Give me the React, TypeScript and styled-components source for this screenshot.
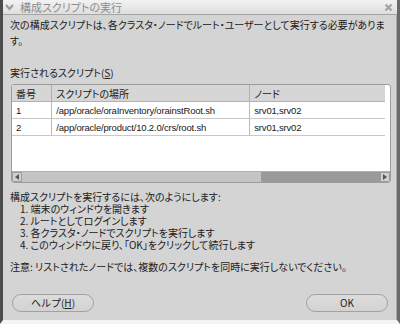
import styled, { createGlobalStyle } from "styled-components";

const GlobalStyle = createGlobalStyle`
  html, body {
    margin: 0;
    padding: 0;
    background: #d4d4d4;
  }
  body {
    font-family: "Noto Sans CJK JP", "Liberation Sans", sans-serif;
    font-size: 10px;
    color: #202020;
    font-feature-settings: "palt";
  }
`;

const Window = styled.div`
  width: 400px;
  height: 324px;
  box-sizing: border-box;
  display: flex;
  flex-direction: column;
  background: #d4d4d4;
  border-left: 3px solid #4c4c4c;
  border-right: 3px solid #6a6a6a;
  border-bottom: 4px solid #f4f4f4;
  overflow: hidden;
`;

const TitleBar = styled.div`
  height: 15px;
  flex: none;
  box-sizing: border-box;
  display: flex;
  align-items: center;
  gap: 6px;
  padding: 0 4px 0 2px;
  background: linear-gradient(#f2f2f2, #dedede);
  border-bottom: 1px solid #a4a4a4;
  color: #8c8c8c;
  font-size: 11px;
`;

const TitleText = styled.span`
  flex: 1;
  line-height: 14px;
`;

const Body = styled.div`
  flex: 1;
  display: flex;
  flex-direction: column;
  padding: 2px 5px 0 7px;
  border-right: 1px solid #a8a8a8;
`;

const Paragraph = styled.p<{ $lh?: number; $mt?: number }>`
  margin: ${p => p.$mt ?? 0}px 0 0;
  line-height: ${p => p.$lh ?? 16}px;
`;

const Underline = styled.span`
  text-decoration: underline;
`;

const TableBox = styled.div`
  margin: 3px 0 0 1px;
  height: 99px;
  box-sizing: border-box;
  display: flex;
  flex-direction: column;
  border: 1px solid #9c9c9c;
  border-radius: 3px;
  background: #fff;
  overflow: hidden;
`;

const TableArea = styled.div`
  flex: 1;
`;

const Table = styled.table`
  width: 373px;
  border-collapse: collapse;
  font-size: 10px;
`;

const HeadCell = styled.th<{ $w: number }>`
  width: ${p => p.$w}px;
  height: 16px;
  padding: 0 0 0 4px;
  text-align: left;
  font-weight: normal;
  background: #d6d6d6;
  border-right: 1px solid #b2b2b2;
  border-bottom: 1px solid #b2b2b2;
  &:last-child { border-right: none; }
`;

const Cell = styled.td`
  height: 16px;
  padding: 0 0 0 4px;
  border-right: 1px solid #b8b8b8;
  border-bottom: 1px solid #c8c8c8;
  font-family: "Liberation Sans", sans-serif;
  font-size: 9.5px;
  letter-spacing: -0.2px;
  &:last-child { border-right: none; }
`;

const ScrollBar = styled.div`
  height: 10px;
  flex: none;
  display: flex;
  background: #c4c4c4;
  border-top: 1px solid #b0b0b0;
`;

const ArrowButton = styled.div`
  width: 10px;
  height: 10px;
  display: flex;
  align-items: center;
  justify-content: center;
  background: #d0d0d0;
  border: 1px solid #9c9c9c;
  box-sizing: border-box;
`;

const Track = styled.div`
  flex: 1;
  display: flex;
`;

const Thumb = styled.div`
  margin-left: auto;
  width: 119px;
  background: #9c999c;
`;

const Steps = styled.div`
  margin-top: 8px;
  line-height: 12px;
`;

const Step = styled.div`
  padding-left: 10px;
`;

const ButtonRow = styled.div`
  margin-top: 21px;
  display: flex;
  justify-content: space-between;
  padding: 0 3px 0 2px;
`;

const Button = styled.button`
  width: 82px;
  height: 18px;
  padding: 0;
  border: 1px solid #a2a2a2;
  border-radius: 9px;
  background: linear-gradient(#dcdcdc, #d2d2d2);
  font-family: "Noto Sans CJK JP", "Liberation Sans", sans-serif;
  font-size: 10px;
  color: #202020;
  line-height: 16px;
`;

function Chevron() {
  return (
    <svg width="9" height="8" viewBox="0 0 9 8">
      <path d="M1 2 L4.5 6 L8 2" fill="none" stroke="#9a9a9a" strokeWidth="2" />
    </svg>
  );
}

function CloseIcon() {
  return (
    <svg width="9" height="9" viewBox="0 0 9 9">
      <path d="M1.5 1.5 L7.5 7.5 M7.5 1.5 L1.5 7.5" stroke="#a0a0a0" strokeWidth="2" />
    </svg>
  );
}

function Arrow({ dir }: { dir: "left" | "right" }) {
  return (
    <svg width="4" height="6" viewBox="0 0 4 6">
      <path d={dir === "left" ? "M4 0 L0 3 L4 6 Z" : "M0 0 L4 3 L0 6 Z"} fill="#555" />
    </svg>
  );
}

const scripts = [
  { no: "1", path: "/app/oracle/oraInventory/orainstRoot.sh", nodes: "srv01,srv02" },
  { no: "2", path: "/app/oracle/product/10.2.0/crs/root.sh", nodes: "srv01,srv02" },
];

export default function App() {
  return (
    <>
      <GlobalStyle />
      <Window>
        <TitleBar>
          <Chevron />
          <TitleText>構成スクリプトの実行</TitleText>
          <CloseIcon />
        </TitleBar>
        <Body>
          <Paragraph>
            次の構成スクリプトは、各クラスタ・ノードでルート・ユーザーとして実行する必要があります。
          </Paragraph>
          <Paragraph $mt={16}>
            実行されるスクリプト(<Underline>S</Underline>)
          </Paragraph>
          <TableBox>
            <TableArea>
              <Table>
                <thead>
                  <tr>
                    <HeadCell $w={36}>番号</HeadCell>
                    <HeadCell $w={194}>スクリプトの場所</HeadCell>
                    <HeadCell $w={133}>ノード</HeadCell>
                  </tr>
                </thead>
                <tbody>
                  {scripts.map(s => (
                    <tr key={s.no}>
                      <Cell>{s.no}</Cell>
                      <Cell>{s.path}</Cell>
                      <Cell>{s.nodes}</Cell>
                    </tr>
                  ))}
                </tbody>
              </Table>
            </TableArea>
            <ScrollBar>
              <ArrowButton><Arrow dir="left" /></ArrowButton>
              <Track><Thumb /></Track>
              <ArrowButton><Arrow dir="right" /></ArrowButton>
            </ScrollBar>
          </TableBox>
          <Steps>
            <div>構成スクリプトを実行するには、次のようにします:</div>
            <Step>1. 端末のウィンドウを開きます</Step>
            <Step>2. ルートとしてログインします</Step>
            <Step>3. 各クラスタ・ノードでスクリプトを実行します</Step>
            <Step>4. このウィンドウに戻り、「OK」をクリックして続行します</Step>
          </Steps>
          <Paragraph $lh={12} $mt={10}>
            注意: リストされたノードでは、複数のスクリプトを同時に実行しないでください。
          </Paragraph>
          <ButtonRow>
            <Button>ヘルプ(<Underline>H</Underline>)</Button>
            <Button>OK</Button>
          </ButtonRow>
        </Body>
      </Window>
    </>
  );
}
